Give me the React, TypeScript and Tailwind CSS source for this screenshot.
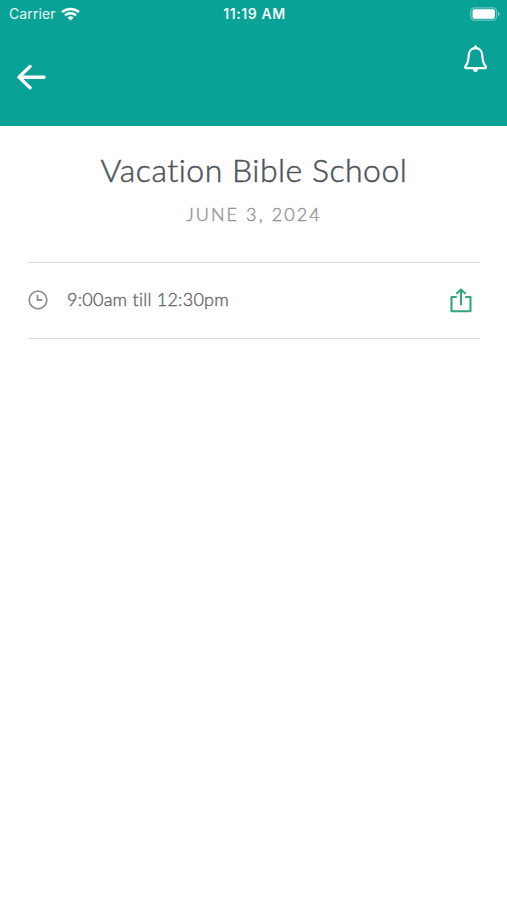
import React from 'react';

const WifiIcon = () => (
  <svg width="19" height="14" viewBox="0 0 18 14" preserveAspectRatio="none" fill="none" stroke="white" strokeWidth="2.5">
    <path d="M1 5.2a11.4 11.4 0 0 1 16 0" />
    <path d="M3.9 8.4a7.3 7.3 0 0 1 10.2 0" />
    <path d="M6.2 10.7a4 4 0 0 1 5.6 0L9 13.6z" fill="white" stroke="none" />
  </svg>
);

const BatteryIcon = () => (
  <svg width="30" height="14" viewBox="0 0 30 14" fill="none">
    <rect x="0.8" y="0.8" width="25.8" height="12.4" rx="3.6" stroke="white" strokeOpacity="0.4" strokeWidth="1.2" />
    <rect x="2.5" y="2.3" width="22.4" height="9.4" rx="1.8" fill="white" />
    <path d="M28 5v4c1-.4 1.5-1.1 1.5-2S29 5.4 28 5z" fill="white" fillOpacity="0.5" />
  </svg>
);

const ArrowIcon = () => (
  <svg width="30" height="26" viewBox="0 0 30 26" fill="none" stroke="white" strokeWidth="3.4" strokeLinecap="round" strokeLinejoin="round">
    <path d="M14 2.5L3 13.1L14 23.7M3.5 13.2H28" />
  </svg>
);

const BellIcon = () => (
  <svg width="25" height="28" viewBox="0 0 25 28" fill="none" stroke="white" strokeWidth="2.2" strokeLinecap="round" strokeLinejoin="round">
    <path d="M12.5 3.2C8.3 3.2 5.9 6.4 5.7 10.4c-.2 4.500-.5 7.800-3 10.400-1 1-.7 2.400.6 2.400h18.400c1.300 0 1.600-1.400.6-2.400-2.500-2.600-2.800-5.900-3-10.400-.2-4-2.600-7.200-6.800-7.200z" />
    <path d="M12.5 1.7v1" strokeWidth="3" />
    <path d="M9.9 24h5.2c-.2 1.9-1.2 3-2.6 3s-2.4-1.1-2.6-3z" fill="white" stroke="none" />
  </svg>
);

const ClockIcon = () => (
  <svg width="20" height="20" viewBox="0 0 20 20" fill="none" stroke="#929292" strokeWidth="1.8">
    <circle cx="10" cy="10" r="8.8" />
    <path d="M9.5 4.8V10H14.2" />
  </svg>
);

const ShareIcon = () => (
  <svg width="22" height="25" viewBox="0 0 22 25" fill="none" stroke="#30a87b" strokeWidth="2.1" strokeLinecap="round" strokeLinejoin="round">
    <path d="M6 9H1.5v14.2h19V9H16" />
    <path d="M11 16.5V2M7 5.2L11 1.5l4 3.7" />
  </svg>
);

const StatusBar: React.FC = () => (
  <div className="grid h-[27px] grid-cols-3 items-center pl-[9px] pr-[7px] font-['Inter','Liberation_Sans',sans-serif] text-white">
    <div className="flex items-center gap-[5px]">
      <span className="text-[14px] tracking-[0.1px] text-white/90">Carrier</span>
      <WifiIcon />
    </div>
    <span className="text-center text-[14px] leading-[20px] font-semibold tracking-[0.6px] text-white/95">11:19 AM</span>
    <div className="flex justify-end">
      <BatteryIcon />
    </div>
  </div>
);

export default function App() {
  return (
    <div className="min-h-[900px] w-full bg-white font-['Lato','Liberation_Sans',sans-serif] [font-variant-ligatures:none]">
      <header className="h-[126px] bg-[#08a296]">
        <StatusBar />
        <div className="flex items-start justify-between pl-4 pr-[19px]">
          <button aria-label="Back" className="mt-[37px]">
            <ArrowIcon />
          </button>
          <button aria-label="Notifications" className="mt-[18px]">
            <BellIcon />
          </button>
        </div>
      </header>

      <main className="pl-7 pr-[27px]">
        <h1 className="pt-[24px] text-center text-[32px] leading-[40px] font-light tracking-[0.5px] whitespace-nowrap text-[#50545b] [-webkit-text-stroke:0.5px_#50545b]">
          Vacation Bible School
        </h1>
        <p className="mt-[12px] text-center text-[18px] leading-6 font-light tracking-[2.1px] text-[#929292] [-webkit-text-stroke:0.4px_#929292]">
          JUNE 3, 2024
        </p>

        <div className="mt-[36px] flex h-[77px] items-center border-y border-[#dedede] pr-2">
          <div className="pb-[2px]">
            <ClockIcon />
          </div>
          <span className="ml-[19px] flex-1 pb-[3px] text-[18px] font-light tracking-[0.25px] text-[#66686c] [-webkit-text-stroke:0.4px_#66686c]">
            9:00am till 12:30pm
          </span>
          <button aria-label="Share">
            <ShareIcon />
          </button>
        </div>
      </main>
    </div>
  );
}
